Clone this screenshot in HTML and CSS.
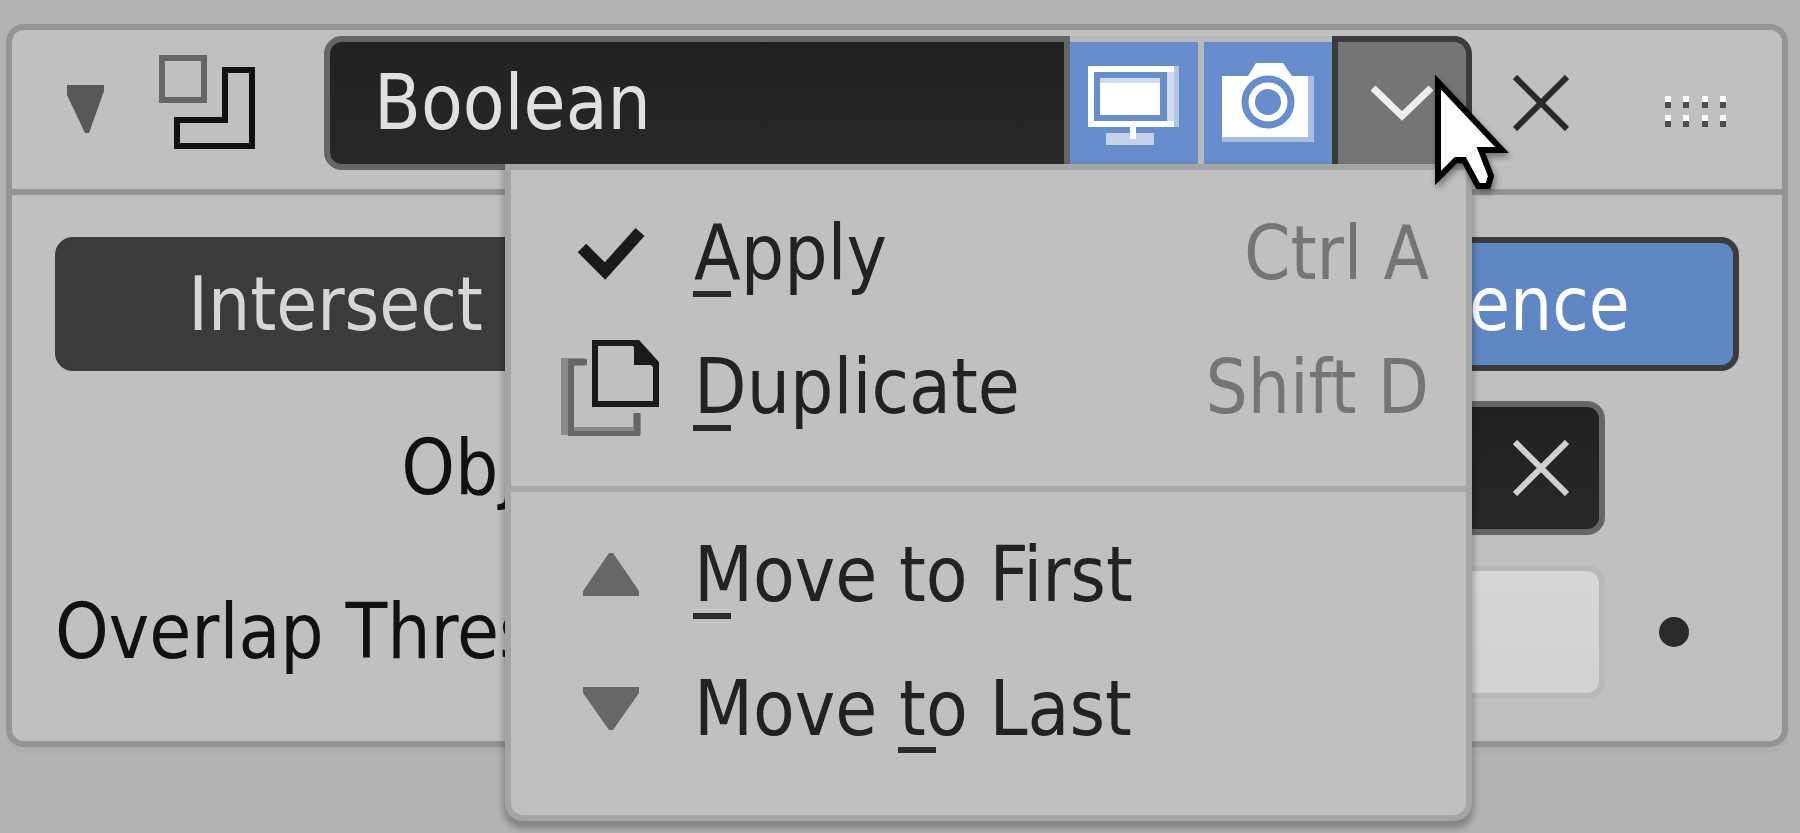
FILE: index.html
```html
<!DOCTYPE html>
<html lang="en">
<head>
  <meta charset="UTF-8" />
  <meta name="viewport" content="width=device-width, initial-scale=1.0" />
  <title>Boolean Modifier</title>
  <link rel="stylesheet" href="styles.css">
</head>
<body>
  <section class="panel">
    <header class="panel-header">
      <button class="icon-btn collapse" aria-label="Collapse">
        <svg width="42" height="64" viewBox="0 0 42 64"><path d="M0 14H37V20L22 62H18L0 24Z" fill="#585858"/></svg>
      </button>
      <svg class="type-icon" width="98" height="98" viewBox="0 0 98 98" fill="none" stroke-width="6">
        <rect x="4" y="4" width="42" height="42" stroke="#666"/>
        <path d="M67 16H94V92H19V66H67Z" stroke="#111"/>
      </svg>

      <div class="name-row">
        <input class="name" type="text" value="Boolean" aria-label="Modifier name" />
        <button class="toggle" aria-label="Show in viewport">
          <svg width="92" height="86" viewBox="0 0 92 86">
            <path fill="#fff" fill-rule="evenodd" d="M0 6H86V67H0ZM6 12V61H79V12ZM12 18H72V55H12Z"/>
            <path fill="#b4c5e4" d="M86 6H91V67H86Z"/>
            <path fill="#cfdbef" d="M12 18H72V23H12ZM79 12H86V61H79Z"/>
            <path fill="#c4d2ea" d="M18 73H66V85H18Z"/>
            <path fill="#fff" d="M42 67H48V79H42Z"/>
          </svg>
        </button>
        <button class="toggle" aria-label="Show in render">
          <svg width="92" height="80" viewBox="0 0 92 80">
            <path fill="#fff" d="M0 13H26L34 0H61L70 13H86V74H0Z"/>
            <path fill="#a9bde1" d="M86 13H92V79H0V74H86Z"/>
            <circle cx="46" cy="39" r="23" fill="none" stroke="#678dcc" stroke-width="7"/>
            <circle cx="46" cy="39" r="13" fill="#678dcc"/>
          </svg>
        </button>
        <button class="extras" aria-label="Modifier menu" aria-expanded="true">
          <svg width="62" height="38" viewBox="0 0 62 38"><path d="M2 4L31 32L60 4" fill="none" stroke="#eee" stroke-width="7"/></svg>
        </button>

        <div class="menu" role="menu">
          <button class="item" role="menuitem">
            <span class="item-icon"><svg width="68" height="54" viewBox="0 0 68 54"><path d="M5 22L28 45L63 6" fill="none" stroke="#1a1a1a" stroke-width="12"/></svg></span>
            <span><span class="key">A</span>pply</span>
            <kbd>Ctrl A</kbd>
          </button>
          <button class="item" role="menuitem">
            <span class="item-icon"><svg width="100" height="98" viewBox="0 0 100 98">
              <path d="M24 24H4V93H76V75" fill="none" stroke="#8a8a8a" stroke-width="8"/>
              <path d="M26 24H10V96H76V75" fill="none" stroke="#666" stroke-width="6"/>
              <path d="M34 5H73L95 28V66H34Z" fill="#c0c0c0" stroke="#1a1a1a" stroke-width="6"/>
              <path d="M73 2H78L98 24V27H73Z" fill="#1a1a1a"/>
            </svg></span>
            <span><span class="key">D</span>uplicate</span>
            <kbd>Shift D</kbd>
          </button>
          <hr>
          <button class="item" role="menuitem">
            <span class="item-icon"><svg width="56" height="44" viewBox="0 0 56 44"><path d="M26 0H30L56 38V43H0V38Z" fill="#676767"/></svg></span>
            <span><span class="key">M</span>ove to First</span>
          </button>
          <button class="item" role="menuitem">
            <span class="item-icon"><svg width="56" height="44" viewBox="0 0 56 44"><path d="M0 0H56V6L30 43H26L0 6Z" fill="#676767"/></svg></span>
            <span>Move <span class="key">t</span>o Last</span>
          </button>
        </div>

        <svg class="cursor" width="84" height="124" viewBox="0 0 84 124">
          <path d="M4 10V106L22 88H30L44 114H54L57 104L47 78H68Z" fill="#fff" stroke="#000" stroke-width="6"/>
        </svg>
      </div>

      <button class="icon-btn remove" aria-label="Remove modifier">
        <svg width="56" height="56" viewBox="0 0 56 56"><path d="M2 2L54 54M54 2L2 54" stroke="#2a2a2a" stroke-width="6"/></svg>
      </button>
      <svg class="grip" width="62" height="50" viewBox="0 0 62 50" stroke-width="6">
        <path d="M3 18V24M21 18V24M40 18V24M58 18V24M3 37V43M21 37V43M40 37V43M58 37V43" stroke="#fff"/>
        <path d="M3 24V30M21 24V30M40 24V30M58 24V30M3 43V49M21 43V49M40 43V49M58 43V49" stroke="#4d4d4d"/>
      </svg>
    </header>

    <div class="panel-body">
      <div class="operations">
        <button>Intersect</button>
        <button>Union</button>
        <button class="active">Difference</button>
      </div>
      <div class="row">
        <label for="object">Object</label>
        <div class="object-field">
          <input id="object" type="text" />
          <button class="icon-btn" aria-label="Clear object">
            <svg width="56" height="56" viewBox="0 0 56 56"><path d="M2 2L54 54M54 2L2 54" stroke="#d0d0d0" stroke-width="6"/></svg>
          </button>
        </div>
      </div>
      <div class="row">
        <label for="threshold">Overlap Threshold</label>
        <input class="number" id="threshold" type="text" />
        <button class="icon-btn animate" aria-label="Animate property"></button>
      </div>
    </div>
  </section>
</body>
</html>
```
FILE: styles.css
```css
* {
  box-sizing: border-box;
}

body {
  min-height: 100vh;
  margin: 0;
  padding: 24px 12px 0 6px;
  background: #b3b3b3;
  color: #111;
  font-family: "DejaVu Sans Condensed", "DejaVu Sans", sans-serif;
  font-size: 76px;
  line-height: 86px;
}

button,
input,
kbd {
  font: inherit;
  color: inherit;
  margin: 0;
  padding: 0;
  border: none;
  border-radius: 0;
  background: none;
}

svg {
  display: block;
  flex: none;
}

.icon-btn {
  display: flex;
  flex: none;
}

.panel {
  border: 6px solid #949494;
  border-radius: 18px;
  background: #c0c0c0;
  box-shadow: 0 6px 0 #aeaeae;
}

.panel-header {
  display: flex;
  align-items: center;
  height: 165px;
  padding: 6px 55px 19px;
  border-bottom: 6px solid #949494;
}

.type-icon {
  margin: 0 68px 0 49px;
}

.name-row {
  position: relative;
  z-index: 1;
  display: flex;
  flex: 1;
  min-width: 0;
  height: 134px;
}

.name {
  flex: 1;
  min-width: 0;
  padding-left: 44px;
  border: 6px solid #666;
  border-radius: 18px 0 0 18px;
  background: linear-gradient(#212121, #282828);
  color: #e0e0e0;
}

.toggle,
.extras {
  display: flex;
  flex: none;
  align-items: center;
  justify-content: center;
}

.toggle {
  width: 134px;
  border: solid #b9b9b9;
  border-width: 6px 6px 6px 0;
  background: #678dcc;
}

.toggle + .toggle {
  width: 128px;
  border-right: none;
}

.extras {
  width: 140px;
  border: 6px solid #3b3b3b;
  border-radius: 0 18px 0 0;
  background: #757575;
}

.remove {
  margin: 0 96px 0 41px;
}

.menu {
  position: absolute;
  top: 128px;
  right: 0;
  width: 967px;
  padding: 16px 0 39px;
  border: 6px solid #a5a5a5;
  border-radius: 0 0 18px 18px;
  background: #c0c0c0;
  color: #222;
  box-shadow: 0 6px 6px 2px rgba(0, 0, 0, 0.25);
}

.item {
  display: flex;
  align-items: center;
  width: 100%;
  height: 134px;
  padding: 0 37px 0 48px;
  text-align: left;
}

.item-icon {
  display: flex;
  justify-content: center;
  width: 104px;
  margin-right: 31px;
}

.item kbd {
  margin-left: auto;
  color: #757575;
  font-size: 74px;
}

.key {
  position: relative;
}

/* accelerator underline */
.key::after {
  content: "";
  position: absolute;
  left: -1px;
  bottom: 0;
  width: 38px;
  height: 6px;
  background: #2a2a2a;
}

.menu hr {
  height: 6px;
  margin: 32px 0 16px;
  border: none;
  background: #aaa;
}

.cursor {
  position: absolute;
  top: 36px;
  right: -46px;
  filter: drop-shadow(2px 4px 3px rgba(0, 0, 0, 0.4));
}

.panel-body {
  display: flex;
  flex-direction: column;
  gap: 30px;
  padding: 42px 43px;
}

.operations {
  display: flex;
  height: 134px;
}

.operations button {
  flex: 1;
  border: 6px solid #3b3b3b;
  background: #3b3b3b;
  color: #d6d6d6;
  font-size: 74px;
}

.operations button:first-child {
  border-radius: 18px 0 0 18px;
}

.operations .active {
  border-radius: 0 18px 18px 0;
  background: #5f87c4;
  color: #fff;
}

.row {
  display: flex;
  align-items: center;
  height: 134px;
  padding-right: 134px;
  position: relative;
}

.row label {
  flex: none;
  width: 569px;
  margin-right: 60px;
  text-align: right;
  white-space: nowrap;
}

.object-field,
.number {
  flex: 1;
  min-width: 0;
  height: 134px;
  border: 6px solid #666;
  border-radius: 18px;
}

.object-field {
  display: flex;
  align-items: center;
  padding-right: 30px;
  background: linear-gradient(#212121, #282828);
}

.object-field input {
  flex: 1;
  min-width: 0;
  color: #e0e0e0;
}

.number {
  border-color: #b8b8b8;
  background: linear-gradient(#d7d7d7, #d2d2d2);
}

.animate {
  position: absolute;
  right: 50px;
  width: 30px;
  height: 30px;
  border-radius: 50%;
  background: #2a2a2a;
}
```
